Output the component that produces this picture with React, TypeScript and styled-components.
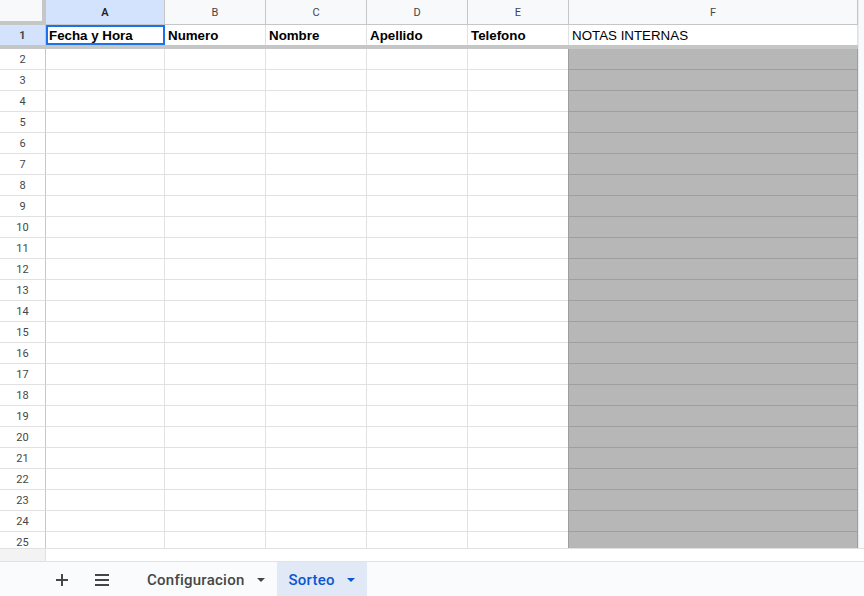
import React from "react";
import styled, {createGlobalStyle, css} from "styled-components";

const Global = createGlobalStyle`
  html, body { margin: 0; padding: 0; background: #fff; }
  body { font-family: Roboto, Arial, sans-serif; }
`

const COLS = '46px 119px 101px 101px 101px 101px 289px'
const LETTERS = ['A', 'B', 'C', 'D', 'E', 'F']
const HEADERS = ['Fecha y Hora', 'Numero', 'Nombre', 'Apellido', 'Telefono', 'NOTAS INTERNAS']

const Sheet = styled.div`
  width: 864px;
  height: 596px;
  display: flex;
  flex-direction: column;
  overflow: hidden;
`

const Top = styled.div`
  display: flex;
  height: 548px;
`

const Grid = styled.div`
  width: 858px;
  display: flex;
  flex-direction: column;
`

const VScroll = styled.div`
  flex: 1;
  background: #f8f9fa;
  border-left: 1px solid #e8eaed;
`

const Row = styled.div<{ $h: number }>`
  display: grid;
  grid-template-columns: ${COLS};
  height: ${p => p.$h}px;
  flex: none;
`

const Corner = styled.div`
  background: #f8f9fa;
  border-right: 4px solid #c4c7c5;
  border-bottom: 4px solid #c4c7c5;
`

const ColHead = styled.div<{ $sel?: boolean }>`
  display: flex;
  align-items: center;
  justify-content: center;
  font-size: 11px;
  color: ${p => p.$sel ? '#1f1f1f' : '#444746'};
  background: ${p => p.$sel ? '#d3e3fd' : '#f8f9fa'};
  font-weight: ${p => p.$sel ? 600 : 400};
  border-right: 1px solid #c4c7c5;
  border-bottom: 1px solid #c4c7c5;
`

const RowHead = styled.div<{ $sel?: boolean }>`
  display: flex;
  align-items: center;
  justify-content: center;
  font-size: 11px;
  color: #444746;
  background: ${p => p.$sel ? '#d3e3fd' : '#fff'};
  font-weight: ${p => p.$sel ? 700 : 400};
  border-right: 1px solid #c4c7c5;
  border-bottom: ${p => p.$sel ? 'none' : '1px solid #e1e1e1'};
`

const Cell = styled.div<{ $bold?: boolean; $shade?: boolean; $active?: boolean; $top?: boolean }>`
  position: relative;
  display: flex;
  align-items: flex-end;
  padding: 0 3px 2px;
  font-family: Arial, "Liberation Sans", sans-serif;
  font-size: 13.333px;
  font-weight: ${p => p.$bold ? 700 : 400};
  color: #000;
  white-space: nowrap;
  overflow: hidden;
  background: ${p => p.$shade ? '#b7b7b7' : '#fff'};
  border-right: 1px solid ${p => p.$shade ? '#9e9e9e' : '#e1e1e1'};
  border-bottom: ${p => p.$top ? 'none' : `1px solid ${p.$shade ? '#9e9e9e' : '#e1e1e1'}`};
  ${p => p.$shade && css`box-shadow: -1px 0 0 #9e9e9e;`}
  ${p => p.$active && css`
    outline: 2px solid #1a73e8;
    outline-offset: -2px;
    z-index: 1;
  `}
`

const Freeze = styled.div`
  height: 4px;
  flex: none;
  background: #c4c7c5;
`

const Body = styled.div`
  height: 499px;
  overflow: hidden;
  flex: none;
`

const Strip = styled.div`
  display: flex;
  height: 12px;
  border-top: 1px solid #e1e1e1;
  border-bottom: 1px solid #e1e3e1;
  background: #fff;
`

const StripHead = styled.div`
  width: 45px;
  background: #f3f3f3;
  border-right: 1px solid #e1e1e1;
`

const Bar = styled.div`
  height: 34px;
  background: #f9fbfd;
  display: flex;
  align-items: stretch;
  padding-left: 42px;
`

const IconBtn = styled.div`
  width: 40px;
  display: flex;
  align-items: center;
  justify-content: center;
  padding-top: 1px;
`

const Spacer = styled.div`
  width: 13px;
`

const Tab = styled.div<{ $active?: boolean }>`
  display: flex;
  align-items: center;
  gap: 12px;
  padding: 2px 12px 0;
  font-size: 15px;
  font-weight: 500;
  letter-spacing: 0.25px;
  color: ${p => p.$active ? '#0b57d0' : '#444746'};
  background: ${p => p.$active ? '#e1e9f7' : 'transparent'};
`

const Caret = ({color}: { color: string }) => (
    <svg width="8" height="4" viewBox="0 0 8 4"><polygon points="0,0 8,0 4,4" fill={color}/></svg>
)

const App = () => {
    let rows = []
    for (let i = 2; i <= 25; i++) rows.push(i)

    return (
        <Sheet>
            <Global/>
            <Top>
                <Grid>
                    <Row $h={25}>
                        <Corner/>
                        {LETTERS.map((l, i) => <ColHead key={l} $sel={i === 0}>{l}</ColHead>)}
                    </Row>
                    <Row $h={20}>
                        <RowHead $sel>1</RowHead>
                        {HEADERS.map((t, i) => (
                            <Cell key={t} $top $bold={i < 5} $active={i === 0}>{t}</Cell>
                        ))}
                    </Row>
                    <Freeze/>
                    <Body>
                        {rows.map(n => (
                            <Row $h={21} key={n}>
                                <RowHead>{n}</RowHead>
                                {LETTERS.map((l, i) => <Cell key={l} $shade={i === 5}/>)}
                            </Row>
                        ))}
                    </Body>
                </Grid>
                <VScroll/>
            </Top>
            <Strip><StripHead/></Strip>
            <Bar>
                <IconBtn>
                    <svg width="12" height="12" viewBox="0 0 12 12">
                        <path d="M6 0v12M0 6h12" stroke="#444746" strokeWidth="2"/>
                    </svg>
                </IconBtn>
                <IconBtn>
                    <svg width="14" height="12" viewBox="0 0 14 12">
                        <path d="M0 1h14M0 6h14M0 11h14" stroke="#444746" strokeWidth="2"/>
                    </svg>
                </IconBtn>
                <Spacer/>
                <Tab>Configuracion<Caret color="#444746"/></Tab>
                <Tab $active>Sorteo<Caret color="#0b57d0"/></Tab>
            </Bar>
        </Sheet>
    )
}

export default App
